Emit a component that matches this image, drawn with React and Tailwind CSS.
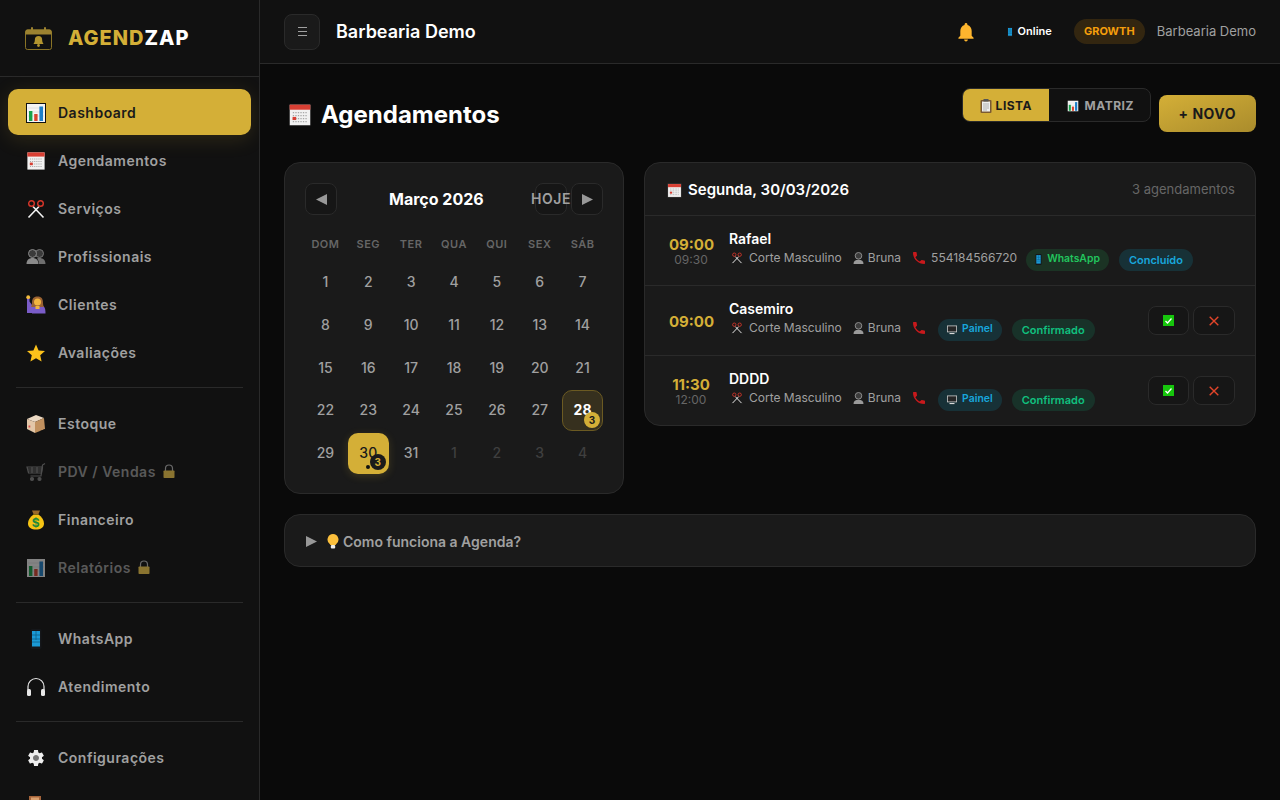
import React from 'react';

// Emoji drawn by hand, the reference uses a set with dark outlines
const ChartIcon = ({ size = 20 }) => (
  <svg width={size} height={size} viewBox="0 0 20 20">
    <rect x="0.5" y="0.5" width="19" height="19" fill="#f4f4f4" stroke="#111" />
    <path d="M2 5h16M2 9h16M2 13h16" stroke="#d5d5d5" strokeWidth="0.6" />
    <rect x="3" y="8" width="3.4" height="10" fill="#16a34a" />
    <rect x="8.2" y="11" width="3.4" height="7" fill="#d9442f" />
    <rect x="13.4" y="3.5" width="3.6" height="14.5" fill="#1d7fc9" />
  </svg>
);

const CalendarIcon = ({ size = 20 }) => (
  <svg width={size} height={size} viewBox="0 0 20 20">
    <rect x="1" y="1" width="18" height="18" fill="#f1f1f1" stroke="#111" strokeWidth="0.8" />
    <rect x="1.4" y="1.4" width="17.2" height="4.2" fill="#d83f33" />
    <path d="M4 8h12M4 10.5h12M4 13h12M4 15.5h12" stroke="#a8a8a8" strokeWidth="1.1" strokeDasharray="1.1 1" />
    <rect x="3.8" y="11.6" width="3" height="2.6" fill="#d83f33" />
  </svg>
);

const ScissorsIcon = ({ size = 20 }) => (
  <svg width={size} height={size} viewBox="0 0 20 20" fill="none">
    <path d="M7 7.5 17.5 18.5M13 7.5 2.5 18.5" stroke="#f2f2f2" strokeWidth="1.6" />
    <circle cx="5.5" cy="4.5" r="2.8" stroke="#d8362a" strokeWidth="1.4" />
    <circle cx="14.5" cy="4.5" r="2.8" stroke="#d8362a" strokeWidth="1.4" />
  </svg>
);

const UsersIcon = () => (
  <svg width="20" height="20" viewBox="0 0 20 20">
    <circle cx="13.5" cy="6.5" r="4" fill="#3a3a3a" stroke="#777" />
    <circle cx="6.5" cy="6.5" r="4" fill="#3a3a3a" stroke="#8a8a8a" />
    <path d="M0.5 17c0-4 2.5-6 6-6s6 2 6 6z" fill="#8a8a8a" />
    <path d="M13 17c0-2-.6-4-2-5.500 1-.5 1.800-.5 2.500-.5 3.500 0 6 2 6 6z" fill="#6e6e6e" />
  </svg>
);

const ClientIcon = () => (
  <svg width="20" height="20" viewBox="0 0 20 20">
    <path d="M1 1.500h2.500v5L6 10h2v8H1z" fill="#7a5cc8" />
    <path d="M6 11h10c2 0 3.500 1.500 3.500 7.500H6z" fill="#7a5cc8" />
    <circle cx="2.200" cy="2.200" r="1.900" fill="#f5bd3c" />
    <path d="M6 7.500C6 3 8.500 1.500 11.500 1.500S17 3 17 7.500c0 2 .5 3.500 1 4.500H5c.5-1 1-2.500 1-4.500z" fill="#9a6233" />
    <circle cx="11.500" cy="7" r="3.500" fill="#f3b53f" />
    <rect x="9.500" y="11" width="4" height="3" fill="#f3b53f" />
  </svg>
);

const StarIcon = () => (
  <svg width="20" height="20" viewBox="0 0 20 20">
    <polygon points="10,1.500 12.600,7.400 19,8 14.200,12.300 15.600,18.600 10,15.300 4.400,18.600 5.800,12.300 1,8 7.400,7.400" fill="#fcc21b" />
  </svg>
);

const BoxIcon = () => (
  <svg width="20" height="20" viewBox="0 0 20 20">
    <polygon points="1,5 10,1 18,4 9,8" fill="#ecd9c3" />
    <polygon points="1,5 9,8 9,19 1,15" fill="#e3c7a8" />
    <polygon points="9,8 18,4 19,15 9,19" fill="#c1915f" />
    <rect x="2.500" y="11.500" width="1.800" height="2" fill="#d8504a" />
    <path d="M14 17.500 19 15.500" stroke="#111" strokeWidth="0.8" />
  </svg>
);

const CartIcon = () => (
  <svg width="20" height="20" viewBox="0 0 20 20" fill="none" stroke="#8a8a8a" strokeWidth="1.200">
    <path d="M19 1.500 16.500 3 15 14H4.500" />
    <path d="M1 5h15.500L15.500 11H2.500zM1.500 7h14.500M2 9h13.500M6 5v6M11 5v6" />
    <circle cx="6" cy="17" r="1.500" fill="#8a8a8a" />
    <circle cx="13.500" cy="17" r="1.500" fill="#8a8a8a" />
  </svg>
);

const MoneyIcon = () => (
  <svg width="20" height="20" viewBox="0 0 20 20">
    <path d="M6 0.500h8L12.500 4h-5z" fill="#9a6a2a" />
    <path d="M7.500 4.500h5c3.500 2.500 5.500 5.500 5.500 9 0 4-3.500 6-8 6s-8-2-8-6c0-3.500 2-6.500 5.500-9z" fill="#f6c414" />
    <text x="10" y="16.500" textAnchor="middle" fontSize="12" fontWeight="700" fill="#1f8a3b" fontFamily="Inter">$</text>
  </svg>
);

const PhoneIcon = ({ width = 20, height = 20 }) => (
  <svg width={width} height={height} viewBox="0 0 12 20">
    <rect x="0.500" y="0" width="11" height="20" rx="1.500" fill="#15171a" />
    <rect x="2" y="2" width="8" height="15.500" fill="#1b9ad6" />
    <path d="M6 2v9M2 6h8M2 10h8M2 13h8" stroke="#0c5f8a" strokeWidth="0.800" />
  </svg>
);

const HeadphonesIcon = () => (
  <svg width="20" height="20" viewBox="0 0 20 20" fill="none">
    <path d="M2 13V9.500a8 8 0 0 1 16 0V13" stroke="#e6e6e6" strokeWidth="1.200" />
    <rect x="1" y="12" width="4" height="7" rx="1.500" fill="#e8e8e8" />
    <rect x="15" y="12" width="4" height="7" rx="1.500" fill="#e8e8e8" />
  </svg>
);

const GearIcon = () => (
  <svg width="20" height="20" viewBox="0 0 24 24">
    <circle cx="12" cy="12" r="4" fill="#777" />
    <path d="M19.140 12.940c.04-.3.06-.61.06-.94 0-.32-.02-.64-.07-.94l2.030-1.580c.18-.14.23-.41.12-.61l-1.920-3.320c-.12-.22-.37-.29-.59-.22l-2.390.96c-.5-.38-1.030-.7-1.620-.94l-.36-2.540c-.04-.24-.24-.41-.48-.41h-3.840c-.24 0-.43.17-.47.41l-.36 2.540c-.59.24-1.130.57-1.620.94l-2.390-.96c-.22-.08-.47 0-.59.22L2.740 8.870c-.12.21-.08.47.12.61l2.030 1.580c-.05.3-.09.63-.09.94s.02.64.07.94l-2.030 1.580c-.18.14-.23.41-.12.61l1.920 3.320c.12.22.37.29.59.22l2.390-.96c.5.38 1.030.7 1.620.94l.36 2.540c.05.24.24.41.48.41h3.840c.24 0 .44-.17.47-.41l.36-2.540c.59-.24 1.130-.56 1.620-.94l2.390.96c.22.08.47 0 .59-.22l1.920-3.320c.12-.22.07-.47-.12-.61l-2.010-1.580zM12 15.600c-1.980 0-3.600-1.620-3.600-3.600s1.620-3.600 3.600-3.600 3.600 1.620 3.600 3.600-1.620 3.600-3.600 3.600z" fill="#efefef" />
  </svg>
);

const LedgerIcon = () => (
  <svg width="20" height="22" viewBox="0 0 20 22">
    <rect x="2.500" y="0.500" width="13" height="20" fill="#a5643a" stroke="#111" />
    <rect x="5" y="2.500" width="8" height="3" fill="#d9a06f" />
  </svg>
);

const LockIcon = () => (
  <svg width="12" height="14" viewBox="0 0 12 14" fill="none">
    <path d="M2.500 7V4.500a3.500 3.500 0 0 1 7 0V7" stroke="#6a6a6a" strokeWidth="1.200" />
    <rect x="0.500" y="6.500" width="11" height="7.500" rx="0.800" fill="#8a7430" />
  </svg>
);

const BellIcon = () => (
  <svg width="18" height="20" viewBox="2.500 1.500 19 21">
    <path d="M12 22c1.100 0 2-.9 2-2h-4c0 1.100.9 2 2 2zm6-6v-5c0-3.070-1.630-5.640-4.500-6.320V4c0-.83-.67-1.500-1.500-1.500s-1.500.67-1.500 1.500v.68C7.640 5.360 6 7.920 6 11v5l-2 2v1h16v-1l-2-2z" fill="#fdb52e" />
  </svg>
);

const ClipboardIcon = () => (
  <svg width="12" height="14" viewBox="0 0 12 14">
    <rect x="0.500" y="1" width="11" height="13" rx="1" fill="#7a5a34" />
    <rect x="2" y="2.500" width="8" height="10" fill="#efefef" />
    <path d="M3 5h6M3 7h6M3 9h6M3 11h4" stroke="#9a9a9a" strokeWidth="0.700" />
    <rect x="3.500" y="0" width="5" height="2.500" fill="#555" />
  </svg>
);

const BustIcon = () => (
  <svg width="11" height="12" viewBox="0 0 11 12">
    <circle cx="5.500" cy="3.800" r="3.300" fill="#3c3c3c" stroke="#8d8d8d" />
    <path d="M0.500 12c0-2.800 1.800-4.200 5-4.200s5 1.400 5 4.200z" fill="#9a9a9a" />
  </svg>
);

const HandsetIcon = () => (
  <svg width="12" height="12" viewBox="3 3 18 18">
    <path d="M6.600 10.800c1.400 2.800 3.800 5.100 6.600 6.600l2.200-2.200c.3-.3.7-.4 1-.2 1.100.4 2.300.6 3.600.6.600 0 1 .4 1 1V20c0 .6-.4 1-1 1C10.600 21 3 13.400 3 4c0-.6.4-1 1-1h3.500c.6 0 1 .4 1 1 0 1.300.2 2.500.6 3.600.1.300 0 .7-.2 1l-2.300 2.200z" fill="#c8191c" />
  </svg>
);

const MonitorIcon = () => (
  <svg width="10" height="10" viewBox="0 0 10 10">
    <rect x="0.400" y="0.900" width="9.200" height="6" fill="#262626" stroke="#c9c9c9" strokeWidth="0.800" />
    <rect x="2.500" y="8" width="5" height="1.100" fill="#d8d8d8" />
  </svg>
);

const CheckIcon = () => (
  <svg width="11" height="11" viewBox="0 0 11 11">
    <rect width="11" height="11" fill="#16c60c" />
    <path d="M2.500 6 4.500 8 8.500 3.500" fill="none" stroke="#fff" strokeWidth="1.300" />
  </svg>
);

const CrossIcon = () => (
  <svg width="10" height="10" viewBox="0 0 10 10">
    <path d="M0.700 0.700 9.300 9.300M9.300 0.700 0.700 9.300" stroke="#e2452a" strokeWidth="1.400" />
  </svg>
);

const BulbIcon = () => (
  <svg width="12" height="15" viewBox="0 0 12 15">
    <path d="M6 0a5.500 5.500 0 0 0-3.500 9.700L3.500 11h5l1-1.300A5.500 5.500 0 0 0 6 0z" fill="#fbbf3c" />
    <rect x="3.800" y="11" width="4.400" height="3.500" rx="1" fill="#ececec" />
  </svg>
);

const Triangle = ({ left, className = '' }) => (
  <svg width="11" height="11" viewBox="0 0 11 11" className={className}>
    <polygon points={left ? '11,0 11,11 0,5.500' : '0,0 0,11 11,5.500'} fill="#989898" />
  </svg>
);

const LogoIcon = () => (
  <svg width="27" height="23" viewBox="0 0 27 23" fill="none">
    <rect x="0.500" y="3" width="26" height="19.500" rx="2" stroke="#8a7426" />
    <path d="M0.500 4.500a2 2 0 0 1 2-2h22a2 2 0 0 1 2 2V7.500H.5z" fill="#9c8230" />
    <rect x="6" y="0" width="2" height="4" rx="1" fill="#9c8230" />
    <rect x="19" y="0" width="2" height="4" rx="1" fill="#9c8230" />
    <path d="M13.500 9a3.600 3.600 0 0 0-3.600 3.600c0 3-1.400 4-1.400 4.400h10c0-.4-1.400-1.400-1.400-4.400A3.600 3.600 0 0 0 13.500 9z" fill="#b3952f" />
    <circle cx="13.500" cy="18.500" r="1.400" fill="#b3952f" />
  </svg>
);

const navGroups = [
  [
    { icon: <ChartIcon />, label: 'Dashboard', active: true },
    { icon: <CalendarIcon />, label: 'Agendamentos' },
    { icon: <ScissorsIcon />, label: 'Serviços' },
    { icon: <UsersIcon />, label: 'Profissionais' },
    { icon: <ClientIcon />, label: 'Clientes' },
    { icon: <StarIcon />, label: 'Avaliações' },
  ],
  [
    { icon: <BoxIcon />, label: 'Estoque' },
    { icon: <CartIcon />, label: 'PDV / Vendas', locked: true },
    { icon: <MoneyIcon />, label: 'Financeiro' },
    { icon: <ChartIcon />, label: 'Relatórios', locked: true },
  ],
  [
    { icon: <PhoneIcon />, label: 'WhatsApp' },
    { icon: <HeadphonesIcon />, label: 'Atendimento' },
  ],
  [
    { icon: <GearIcon />, label: 'Configurações' },
    { icon: <LedgerIcon /> },
  ],
];

const weekDays = ['DOM', 'SEG', 'TER', 'QUA', 'QUI', 'SEX', 'SÁB'];

const appointments = [
  { start: '09:00', end: '09:30', name: 'Rafael', phone: '554184566720', source: 'WhatsApp', status: 'Concluído' },
  { start: '09:00', name: 'Casemiro', source: 'Painel', status: 'Confirmado', actions: true },
  { start: '11:30', end: '12:00', name: 'DDDD', source: 'Painel', status: 'Confirmado', actions: true },
];

const NavItem = ({ item }) => (
  <div
    className={`mb-0.5 flex h-[46px] items-center gap-3 rounded-[10px] px-[18px] pt-0.5 text-sm font-semibold tracking-[0.5px] ${
      item.active ? 'bg-[#d4af37] text-[#1a1a1a] shadow-[0_4px_20px_rgba(212,175,55,0.15)]' : 'text-[#a0a0a0]'
    }`}
  >
    <span className={`flex w-5 justify-center ${item.locked ? 'opacity-50' : ''}`}>{item.icon}</span>
    <span className={item.locked ? 'opacity-50' : ''}>{item.label}</span>
    {item.locked && <span className="-ml-[5px] -mt-0.5"><LockIcon /></span>}
  </div>
);

const Sidebar = () => (
  <aside className="flex h-screen w-[260px] shrink-0 flex-col overflow-hidden border-r border-[#2a2a2a] bg-[#111111]">
    <div className="flex h-[77px] shrink-0 items-center gap-4 border-b border-[#2a2a2a] pl-[25px]">
      <LogoIcon />
      <span className="text-xl font-extrabold tracking-[1px] text-[#d4af37]">
        AGEND<span className="text-white">ZAP</span>
      </span>
    </div>
    <nav className="px-2 pt-3">
      {navGroups.map((group, i) => (
        <div key={i}>
          {i > 0 && <div className="mx-2 my-3 h-px bg-[#2a2a2a]" />}
          {group.map((item, j) => (
            <NavItem key={j} item={item} />
          ))}
        </div>
      ))}
    </nav>
  </aside>
);

const Header = () => (
  <header className="flex h-16 shrink-0 items-center justify-between border-b border-[#2a2a2a] bg-[#111111] px-6">
    <div className="flex items-center gap-4">
      <button className="flex h-9 w-9 flex-col items-center justify-center gap-[3px] rounded-lg border border-[#2a2a2a] bg-[#1a1a1a]">
        <span className="h-px w-[9px] bg-[#a0a0a0]" />
        <span className="h-px w-[9px] bg-[#a0a0a0]" />
        <span className="h-px w-[9px] bg-[#a0a0a0]" />
      </button>
      <span className="text-lg font-semibold text-white">Barbearia Demo</span>
    </div>
    <div className="flex items-center">
      <BellIcon />
      <span className="ml-8 flex items-center gap-[5px] text-[11px] font-semibold text-white">
        <PhoneIcon width={6} height={10} />Online
      </span>
      <span className="ml-[22px] flex w-[71px] justify-center rounded-full bg-[rgba(245,158,11,0.15)] py-1 text-[11px] font-bold text-[#f59e0b]">
        GROWTH
      </span>
      <span className="ml-3 text-[13px] text-[#a0a0a0]">Barbearia Demo</span>
    </div>
  </header>
);

const CalendarDay = ({ day, muted, today, hasCount }) => {
  if (today) {
    return (
      <div className="relative flex aspect-square items-center justify-center rounded-[10px] bg-[#d4af37] text-sm font-medium text-[#1a1a1a] shadow-[0_2px_8px_rgba(212,175,55,0.2)]">
        {day}
        <span className="absolute bottom-[5px] left-[18px] h-1 w-1 rounded-full bg-[#111111]" />
        <span className="absolute bottom-1 right-[3px] flex h-4 w-4 items-center justify-center rounded-full bg-[#1a1a1a] text-[10px] font-bold text-[#d4af37]">
          3
        </span>
      </div>
    );
  }
  if (hasCount) {
    return (
      <div className="relative flex aspect-square items-center justify-center rounded-[10px] border border-[#6b5a22] bg-[rgba(212,175,55,0.15)] text-sm font-bold text-white">
        {day}
        <span className="absolute bottom-0.5 right-0.5 flex h-4 w-4 items-center justify-center rounded-full bg-[#d4af37] text-[10px] font-bold text-[#1a1a1a]">
          3
        </span>
      </div>
    );
  }
  return (
    <div className={`flex aspect-square items-center justify-center text-sm font-medium ${muted ? 'text-[#3f3f3f]' : 'text-[#a0a0a0]'}`}>
      {day}
    </div>
  );
};

const Calendar = () => {
  const days = [];
  for (let d = 1; d <= 31; d++) days.push({ day: d });
  for (let d = 1; d <= 4; d++) days.push({ day: d, muted: true });

  return (
    <div className="h-[332px] w-[340px] shrink-0 rounded-2xl border border-[#2a2a2a] bg-[#1a1a1a] px-5 pt-5">
      <div className="flex h-8 items-center">
        <button className="flex h-8 w-8 items-center justify-center rounded-lg border border-[#2a2a2a] bg-[#161616]">
          <Triangle left />
        </button>
        <span className="ml-[52px] text-base font-bold text-white">Março 2026</span>
        <div className="ml-auto flex items-center gap-1">
          <button className="flex h-8 w-8 items-center justify-center whitespace-nowrap rounded-lg border border-[#2a2a2a] bg-[#161616] text-sm font-semibold tracking-[0.5px] text-[#a0a0a0]">
            HOJE
          </button>
          <button className="flex h-8 w-8 items-center justify-center rounded-lg border border-[#2a2a2a] bg-[#161616]">
            <Triangle />
          </button>
        </div>
      </div>
      <div className="mt-5 grid grid-cols-7 gap-x-[2px]">
        {weekDays.map((d) => (
          <div key={d} className="flex h-[19px] items-center justify-center text-[11px] font-semibold tracking-[0.5px] text-[#666666]">
            {d}
          </div>
        ))}
      </div>
      <div className="mt-[7.4px] grid grid-cols-7 gap-[2px]">
        {days.map((d, i) => (
          <CalendarDay key={i} day={d.day} muted={d.muted} today={!d.muted && d.day === 30} hasCount={!d.muted && d.day === 28} />
        ))}
      </div>
    </div>
  );
};

const AppointmentRow = ({ a, last }) => (
  <div className={`flex items-center pl-6 pr-5 ${last ? 'h-[69px]' : 'h-[70px] border-b border-[#2a2a2a]'}`}>
    <div className="w-[44px] shrink-0 pt-[3px] text-center">
      <div className="text-[15px] font-bold leading-4 text-[#d4af37]">{a.start}</div>
      {a.end && <div className="text-xs leading-[14px] text-[#666666]">{a.end}</div>}
    </div>
    <div className="ml-4">
      <div className="pb-0.5 text-sm font-semibold leading-4 text-white">{a.name}</div>
      <div className="flex items-start text-xs leading-[18px] text-[#a0a0a0]">
        <span className="ml-0.5 flex h-[18px] items-center gap-1.5"><ScissorsIcon size={12} />Corte Masculino</span>
        <span className="ml-[11px] flex h-[18px] items-center gap-1"><BustIcon />Bruna</span>
        <span className="ml-3 flex h-[18px] items-center gap-1.5"><HandsetIcon />{a.phone}</span>
        <span
          className={`flex h-[22px] items-center gap-[5px] rounded-full px-[9px] pb-0.5 text-[10.4px] font-semibold ${a.phone ? 'ml-[9px]' : 'ml-[13px]'} ${
            a.source === 'WhatsApp' ? 'bg-[rgba(34,197,94,0.15)] text-[#22c55e]' : 'bg-[rgba(14,165,200,0.17)] text-[#17a6dc]'
          }`}
        >
          <span className="mt-0.5">{a.source === 'WhatsApp' ? <PhoneIcon width={7} height={11} /> : <MonitorIcon />}</span>
          {a.source}
        </span>
        <span
          className={`ml-[10px] flex h-[22px] items-center rounded-full px-[10px] text-[11px] font-semibold ${
            a.status === 'Concluído' ? 'bg-[rgba(14,165,200,0.17)] text-[#17a6dc]' : 'bg-[rgba(16,185,129,0.15)] text-[#10c07f]'
          }`}
        >
          {a.status}
        </span>
      </div>
    </div>
    {a.actions && (
      <div className="ml-auto flex items-center gap-[4px]">
        <button className="flex h-[29px] w-[41px] items-center justify-center rounded-lg border border-[#2a2a2a] bg-[#161616]"><CheckIcon /></button>
        <button className="flex h-[29px] w-[42px] items-center justify-center rounded-lg border border-[#2a2a2a] bg-[#161616]"><CrossIcon /></button>
      </div>
    )}
  </div>
);

const DayPanel = () => (
  <div className="flex-1 self-start rounded-2xl border border-[#2a2a2a] bg-[#1a1a1a]">
    <div className="flex h-[53px] items-center justify-between border-b border-[#2a2a2a] pl-[22px] pr-5 pt-0.5">
      <span className="flex items-center gap-1.5 text-[15px] font-semibold text-white"><CalendarIcon size={15} />Segunda, 30/03/2026</span>
      <span className="text-[13px] text-[#666666]">3 agendamentos</span>
    </div>
    {appointments.map((a, i) => (
      <AppointmentRow key={a.name} a={a} last={i === appointments.length - 1} />
    ))}
  </div>
);

export default function App() {
  return (
    <div className="flex h-screen overflow-hidden bg-[#0a0a0a] font-['Inter',sans-serif]">
      <Sidebar />
      <div className="flex min-w-0 flex-1 flex-col">
        <Header />
        <main className="px-6 pt-6">
          <div className="flex h-[50px] items-start justify-between">
            <h1 className="ml-1 mt-[9px] flex items-center gap-[9px] text-2xl font-bold leading-9 text-white"><CalendarIcon size={24} />Agendamentos</h1>
            <div className="flex items-start gap-2">
              <div className="flex h-[34px] overflow-hidden rounded-lg border border-[#2a2a2a] bg-[#111111] text-xs font-bold tracking-[0.5px]">
                <span className="flex w-[86px] items-center gap-1 bg-[#d4af37] pl-[17px] pt-px text-[#1a1a1a]"><ClipboardIcon />LISTA</span>
                <span className="flex w-[101px] items-center gap-1.5 pl-[18px] pt-px text-[#a0a0a0]"><ChartIcon size={12} />MATRIZ</span>
              </div>
              <button className="mt-[7px] h-[37px] rounded-lg bg-gradient-to-br from-[#d4af37] to-[#aa8c2c] px-5 text-sm font-bold tracking-[0.5px] text-[#1a1a1a]">
                + NOVO
              </button>
            </div>
          </div>
          <div className="mt-6 flex gap-5">
            <Calendar />
            <DayPanel />
          </div>
          <div className="mt-5 flex h-[53px] items-center rounded-2xl border border-[#2a2a2a] bg-[#1a1a1a] pl-[21px] pt-0.5 text-sm font-semibold text-[#a0a0a0]">
            <Triangle />
            <span className="ml-2.5 mr-1"><BulbIcon /></span>
            Como funciona a Agenda?
          </div>
        </main>
      </div>
    </div>
  );
}
